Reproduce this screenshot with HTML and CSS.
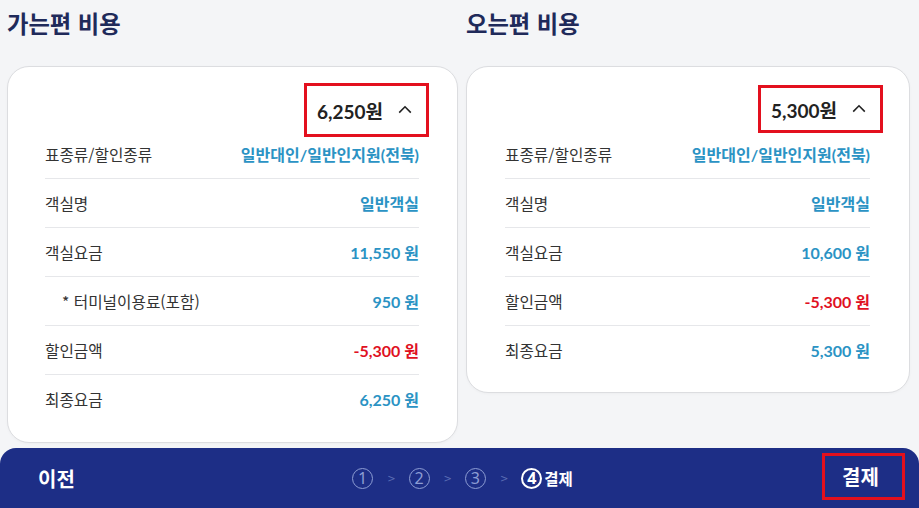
FILE: index.html
```html
<!DOCTYPE html>
<html lang="ko">
<head>
<meta charset="utf-8">
<title>비용</title>
<link rel="stylesheet" href="styles.css">
</head>
<body>
<div class="page">
  <div class="columns">
    <section class="col col--left">
      <h2 class="title">가는편 비용</h2>
      <div class="card card--left">
        <div class="card-head">
          <div class="total total--left">
            <span class="total-amount">6,250원</span>
            <svg class="chev" width="14" height="9" viewBox="0 0 14 9"><path d="M1.2 7.6 L7 1.8 L12.8 7.6" fill="none" stroke="#222" stroke-width="1.6"/></svg>
          </div>
        </div>
        <div class="row"><span class="label">표종류/할인종류</span><span class="value">일반대인/일반인지원(전북)</span></div>
        <div class="row"><span class="label">객실명</span><span class="value">일반객실</span></div>
        <div class="row"><span class="label">객실요금</span><span class="value">11,550 원</span></div>
        <div class="row"><span class="label label--sub">* 터미널이용료(포함)</span><span class="value">950 원</span></div>
        <div class="row"><span class="label">할인금액</span><span class="value value--minus">-5,300 원</span></div>
        <div class="row"><span class="label">최종요금</span><span class="value">6,250 원</span></div>
      </div>
    </section>
    <section class="col col--right">
      <h2 class="title">오는편 비용</h2>
      <div class="card card--right">
        <div class="card-head">
          <div class="total total--right">
            <span class="total-amount">5,300원</span>
            <svg class="chev" width="14" height="9" viewBox="0 0 14 9"><path d="M1.2 7.6 L7 1.8 L12.8 7.6" fill="none" stroke="#222" stroke-width="1.6"/></svg>
          </div>
        </div>
        <div class="row"><span class="label">표종류/할인종류</span><span class="value">일반대인/일반인지원(전북)</span></div>
        <div class="row"><span class="label">객실명</span><span class="value">일반객실</span></div>
        <div class="row"><span class="label">객실요금</span><span class="value">10,600 원</span></div>
        <div class="row"><span class="label">할인금액</span><span class="value value--minus">-5,300 원</span></div>
        <div class="row"><span class="label">최종요금</span><span class="value">5,300 원</span></div>
      </div>
    </section>
  </div>
  <nav class="bar">
    <div class="bar-left"><span class="prev">이전</span></div>
    <div class="steps">
      <span class="step">1</span><span class="sep">&gt;</span>
      <span class="step">2</span><span class="sep">&gt;</span>
      <span class="step">3</span><span class="sep">&gt;</span>
      <span class="step step--active">4</span><span class="step-name">결제</span>
    </div>
    <div class="bar-right"><span class="pay">결제</span></div>
  </nav>
</div>
</body>
</html>
```

FILE: styles.css
```css
* { box-sizing: border-box; }
html, body { margin: 0; padding: 0; }
body {
  background: #f4f5f7;
  font-family: "Noto Sans CJK KR", "Noto Sans", sans-serif;
  color: #333;
  width: 919px;
  height: 508px;
  overflow: hidden;
}
.page { padding-top: 8px; }
.columns {
  display: flex;
  align-items: flex-start;
  gap: 8px;
  padding-left: 7px;
}
.col--left { width: 451px; }
.col--right { width: 444px; }
.title {
  margin: 0 0 28px 0;
  font-size: 23.3px;
  line-height: 30px;
  font-weight: 700;
  color: #1f2a5a;
}
.card {
  background: #fff;
  border: 1px solid #dcdde0;
  border-radius: 22px;
  padding: 0 38px 19px 37px;
  box-shadow: 0 1px 3px rgba(0,0,0,0.03);
}
.card--right { padding: 0 39px 18px 38px; }
.card-head {
  height: 63px;
  display: flex;
  justify-content: flex-end;
  align-items: flex-start;
  padding-top: 16px;
}
.total {
  display: flex;
  align-items: center;
  gap: 15px;
  height: 54px;
  border: 3px solid #e3101e;
  padding: 0 14px 0 10px;
  margin-right: -10px;
}
.total--right { height: 48px; margin-top: 2px; margin-right: -13px; }
.total-amount {
  font-family: Lato, "Noto Sans CJK KR", sans-serif;
  font-weight: 700;
  font-size: 19px;
  color: #222;
}
.chev { display: block; margin-top: -2px; }
.row {
  height: 49px;
  display: flex;
  justify-content: space-between;
  align-items: center;
  border-bottom: 1px solid #e6e7ea;
}
.row:last-child { height: 48px; border-bottom: none; }
.label {
  font-size: 15.7px;
  color: #333;
}
.label--sub { padding-left: 17px; }
.value {
  font-family: Lato, "Noto Sans CJK KR", sans-serif;
  font-weight: 700;
  font-size: 16px;
  color: #2b93c4;
}
.value--minus { color: #e0111f; }
.bar {
  margin-top: 5px;
  height: 60px;
  background: #1d2e86;
  border-radius: 16px 16px 0 0;
  display: grid;
  grid-template-columns: 1fr auto 1fr;
  align-items: center;
  color: #fff;
}
.bar-left { padding-left: 38px; }
.prev {
  font-size: 20px;
  font-weight: 700;
  color: #fff;
}
.steps {
  display: flex;
  align-items: center;
  padding-left: 6px;
}
.step {
  width: 21px;
  height: 21px;
  border-radius: 50%;
  border: 1.2px solid #8d9dd4;
  color: #8d9dd4;
  font-family: "Noto Sans", sans-serif;
  font-size: 16px;
  line-height: 18px;
  text-align: center;
}
.step--active {
  border: 2px solid #fff;
  color: #fff;
  font-weight: 700;
  line-height: 17px;
}
.sep {
  color: #5a6cb4;
  font-family: "DejaVu Sans", sans-serif;
  font-size: 10px;
  margin: 0 13px 0 14px;
}
.step-name {
  margin-left: 2px;
  font-size: 15.5px;
  font-weight: 700;
  color: #fff;
}
.bar-right {
  display: flex;
  justify-content: flex-end;
  padding-right: 14px;
}
.pay {
  width: 83px;
  height: 47px;
  border: 3px solid #e3101e;
  display: flex;
  align-items: center;
  justify-content: center;
  padding-right: 6px;
  font-size: 20px;
  font-weight: 700;
  color: #fff;
  margin-top: -3px;
}
```
